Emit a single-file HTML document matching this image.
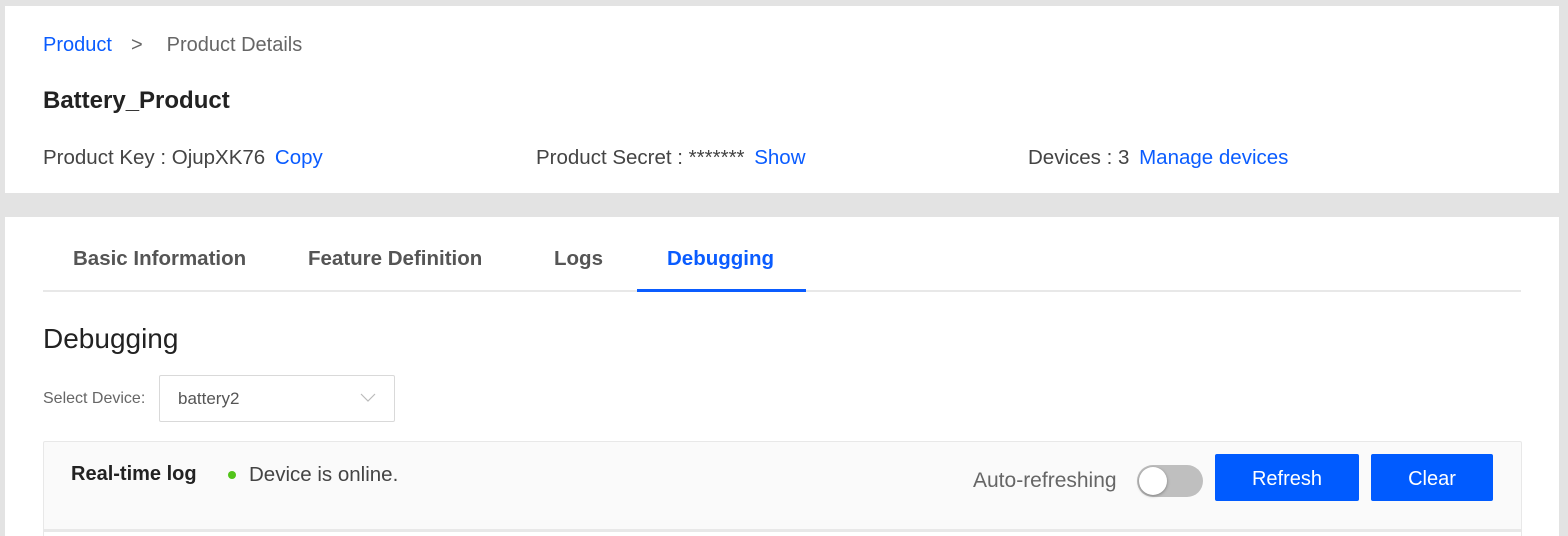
<!DOCTYPE html>
<html><head><meta charset="utf-8"><style>
*{margin:0;padding:0;box-sizing:border-box}
html,body{width:1568px;height:536px;overflow:hidden}
body{background:#e3e3e3;font-family:"Liberation Sans",sans-serif;position:relative;color:#333}
.card{position:absolute;left:5px;width:1554px;background:#fff}
.a{position:absolute;white-space:nowrap}
.blue{color:#0a5cff}
.tab{position:absolute;top:247px;font-size:20.5px;font-weight:bold;color:#555}
.btn{position:absolute;top:454px;height:47px;background:#005bff;color:#fff;border-radius:2px;font-size:20px;text-align:center;line-height:51px}
</style></head><body>
<div class="card" style="top:6px;height:187px"></div>
<div class="card" style="top:217px;height:319px"></div>
<div class="a" style="left:43px;top:34px;font-size:20px"><span class="blue">Product</span><span style="color:#666;margin-left:19px">&gt;</span><span style="color:#666;margin-left:24px">Product Details</span></div>
<div class="a" style="left:43px;top:87px;font-size:24px;font-weight:bold;color:#222">Battery_Product</div>
<div class="a" style="left:43px;top:146px;font-size:20.5px;color:#444">Product Key : OjupXK76 <span class="blue" style="margin-left:4px">Copy</span></div>
<div class="a" style="left:536px;top:146px;font-size:20.5px;color:#444">Product Secret : ******* <span class="blue" style="margin-left:4px">Show</span></div>
<div class="a" style="left:1028px;top:146px;font-size:20.5px;color:#444">Devices : 3 <span class="blue" style="margin-left:4px">Manage devices</span></div>
<div class="tab" style="left:73px">Basic Information</div>
<div class="tab" style="left:308px">Feature Definition</div>
<div class="tab" style="left:554px">Logs</div>
<div class="tab" style="left:667px;color:#0a5cff">Debugging</div>
<div class="a" style="left:43px;top:290px;width:1478px;height:2px;background:#e8e8e8"></div>
<div class="a" style="left:637px;top:289px;width:169px;height:3px;background:#0a5cff"></div>
<div class="a" style="left:43px;top:323px;font-size:28px;color:#222">Debugging</div>
<div class="a" style="left:43px;top:390px;font-size:16px;color:#666">Select Device:</div>
<div class="a" style="left:159px;top:375px;width:236px;height:47px;border:1px solid #d9d9d9;border-radius:2px"></div>
<div class="a" style="left:178px;top:389px;font-size:17px;color:#555">battery2</div>
<svg class="a" style="left:360px;top:393px" width="16" height="10"><path d="M1 1 L8 8 L15 1" fill="none" stroke="#bbb" stroke-width="1.2"/></svg>
<div class="a" style="left:43px;top:441px;width:1479px;height:100px;background:#fafafa;border:1px solid #e8e8e8;border-radius:2px"></div>
<div class="a" style="left:44px;top:529px;width:1477px;height:3px;background:#e8e8e8"></div>
<div class="a" style="left:44px;top:532px;width:1477px;height:4px;background:#fff"></div>
<div class="a" style="left:71px;top:463px;font-size:20px;font-weight:bold;color:#222">Real-time log</div>
<div class="a" style="left:228px;top:471px;width:8px;height:8px;border-radius:50%;background:#52c41a"></div>
<div class="a" style="left:249px;top:463px;font-size:20.5px;color:#444">Device is online.</div>
<div class="a" style="left:973px;top:469px;font-size:21px;color:#666">Auto-refreshing</div>
<div class="a" style="left:1137px;top:465px;width:66px;height:32px;border-radius:16px;background:#bfbfbf"></div>
<div class="a" style="left:1139px;top:467px;width:28px;height:28px;border-radius:50%;background:#fff;box-shadow:0 1px 3px rgba(0,0,0,.35)"></div>
<div class="btn" style="left:1215px;width:144px">Refresh</div>
<div class="btn" style="left:1371px;width:122px">Clear</div>
</body></html>
